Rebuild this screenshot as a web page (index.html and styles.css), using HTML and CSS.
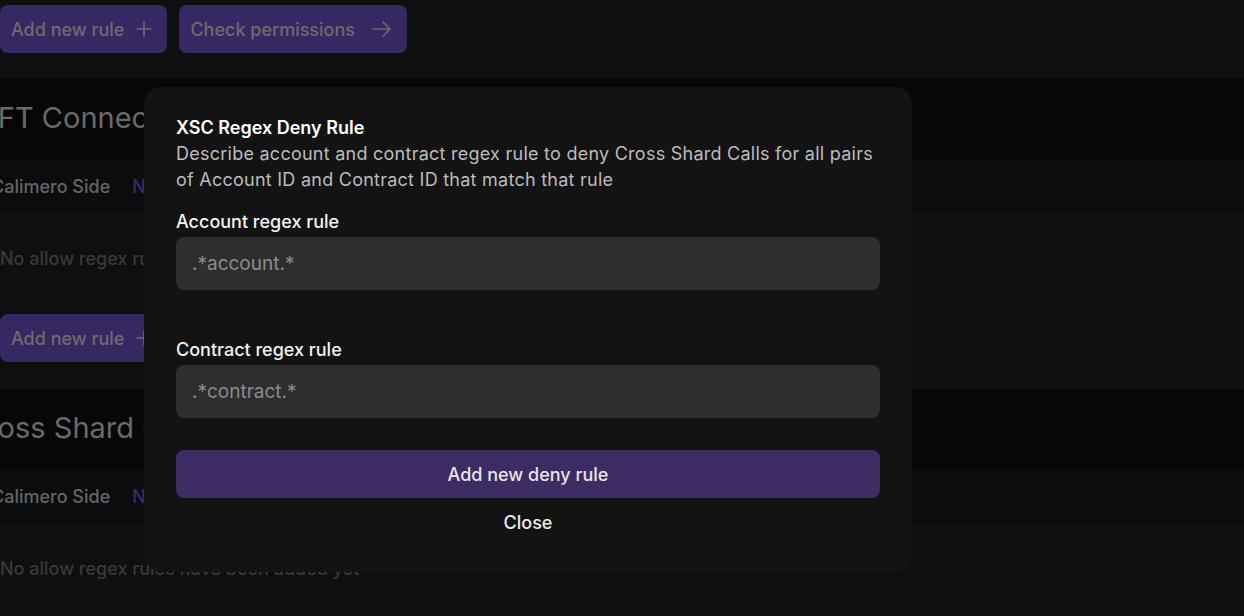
FILE: index.html
```html
<!DOCTYPE html>
<html lang="en">
<head>
<meta charset="utf-8">
<title>XSC Regex Deny Rule</title>
<link rel="stylesheet" href="styles.css">
</head>
<body>
<div class="page">
  <div class="toolbar">
    <button class="bg-btn">Add new rule
      <svg class="ico" viewBox="0 0 16 16" width="16" height="16"><path d="M8 1v14M1 8h14" stroke="currentColor" stroke-width="1.6" fill="none" stroke-linecap="round"/></svg>
    </button>
    <button class="bg-btn">Check permissions
      <svg class="ico arrow" viewBox="0 0 20 16" width="20" height="16"><path d="M1 8h17M11 1l7 7-7 7" stroke="currentColor" stroke-width="1.6" fill="none" stroke-linecap="round" stroke-linejoin="round"/></svg>
    </button>
  </div>

  <section class="block">
    <div class="band-head"><h2 class="heading h-ft">NFT Connector Permissions</h2></div>
    <div class="band-row"><span class="tab">Calimero Side</span><span class="tab active">NEAR Side</span></div>
    <p class="empty">No allow regex rules have been added yet</p>
    <div class="toolbar2">
      <button class="bg-btn">Add new rule
        <svg class="ico" viewBox="0 0 16 16" width="16" height="16"><path d="M8 1v14M1 8h14" stroke="currentColor" stroke-width="1.6" fill="none" stroke-linecap="round"/></svg>
      </button>
    </div>
  </section>

  <section class="block">
    <div class="band-head"><h2 class="heading h-cs">Cross Shard Call Permissions</h2></div>
    <div class="band-row"><span class="tab">Calimero Side</span><span class="tab active">NEAR Side</span></div>
    <p class="empty">No allow regex rules have been added yet</p>
  </section>
</div>

<div class="modal">
  <h3 class="m-title">XSC Regex Deny Rule</h3>
  <p class="m-desc">Describe account and contract regex rule to deny Cross Shard Calls for all pairs of Account ID and Contract ID that match that rule</p>
  <label class="m-label first">Account regex rule</label>
  <input class="m-input" type="text" placeholder=".*account.*">
  <label class="m-label second">Contract regex rule</label>
  <input class="m-input" type="text" placeholder=".*contract.*">
  <button class="m-submit">Add new deny rule</button>
  <button class="m-close">Close</button>
</div>
</body>
</html>
```

FILE: styles.css
```css
* { box-sizing: border-box; }
html, body {
  margin: 0;
  padding: 0;
  background: #0e0f11;
  font-family: Inter, "Liberation Sans", sans-serif;
  overflow: hidden;
  height: 616px;
}
.page {
  display: flex;
  flex-direction: column;
}
.toolbar {
  display: flex;
  gap: 12px;
  padding-top: 5px;
  height: 79px;
}
.toolbar2 {
  display: flex;
  height: 75px;
  align-items: flex-start;
}
.bg-btn {
  display: flex;
  align-items: center;
  gap: 12px;
  height: 48px;
  padding: 0 15px 0 11px;
  border: none;
  border-radius: 8px;
  background: #372763;
  color: #6c6c6c;
  font-family: inherit;
  font-size: 18px;
  font-weight: 500;
}
.bg-btn .ico { color: #6c6c6c; }
.bg-btn .arrow { margin-left: 5px; }
.band-head {
  height: 80px;
  background: #070707;
  display: flex;
  align-items: center;
  padding-bottom: 4px;
}
.heading {
  margin: 0;
  font-size: 29px;
  font-weight: 400;
  color: #6a6a6a;
  white-space: nowrap;
}
.h-ft { margin-left: -24px; }
.h-cs { margin-left: -34px; }
.band-row {
  height: 54px;
  background: #0b0c0e;
  display: flex;
  align-items: center;
  gap: 22px;
  margin-left: -9px;
}
.tab {
  font-size: 18px;
  font-weight: 500;
  color: #656565;
}
.tab.active { color: #3a2a6b; }
.empty {
  margin: 0;
  height: 101px;
  padding-top: 35px;
  font-size: 18px;
  font-weight: 500;
  color: #38393c;
}
.modal {
  position: fixed;
  left: 144px;
  top: 87px;
  width: 768px;
  height: 485px;
  background: #131313;
  border-radius: 18px;
  padding: 29px 32px 37px;
  display: flex;
  flex-direction: column;
}
.m-title {
  margin: 0;
  font-size: 18px;
  line-height: 24px;
  font-weight: 600;
  color: #ffffff;
}
.m-desc {
  margin: 1px 0 0;
  font-size: 18px;
  line-height: 26px;
  letter-spacing: 0.25px;
  color: #bcbcbc;
}
.m-label {
  display: block;
  font-size: 18px;
  line-height: 24px;
  font-weight: 500;
  color: #f2f2f2;
}
.m-label.first { margin-top: 17px; }
.m-label.second { margin-top: 48px; }
.m-input {
  margin-top: 3px;
  height: 53px;
  width: 100%;
  border: none;
  border-radius: 8px;
  background: #2e2e2e;
  padding: 0 16px;
  font-family: inherit;
  font-size: 19px;
  color: #e0e0e0;
  outline: none;
}
.m-input::placeholder { color: #8c8c8c; }
.m-submit {
  margin-top: 32px;
  height: 48px;
  width: 100%;
  border: none;
  border-radius: 8px;
  background: #3c2c63;
  color: #e6e6e6;
  font-family: inherit;
  font-size: 18px;
  font-weight: 500;
}
.m-close {
  margin: 12px auto 0;
  height: 24px;
  border: none;
  background: transparent;
  color: #ececec;
  font-family: inherit;
  font-size: 18px;
  font-weight: 500;
  padding: 0;
}
```
